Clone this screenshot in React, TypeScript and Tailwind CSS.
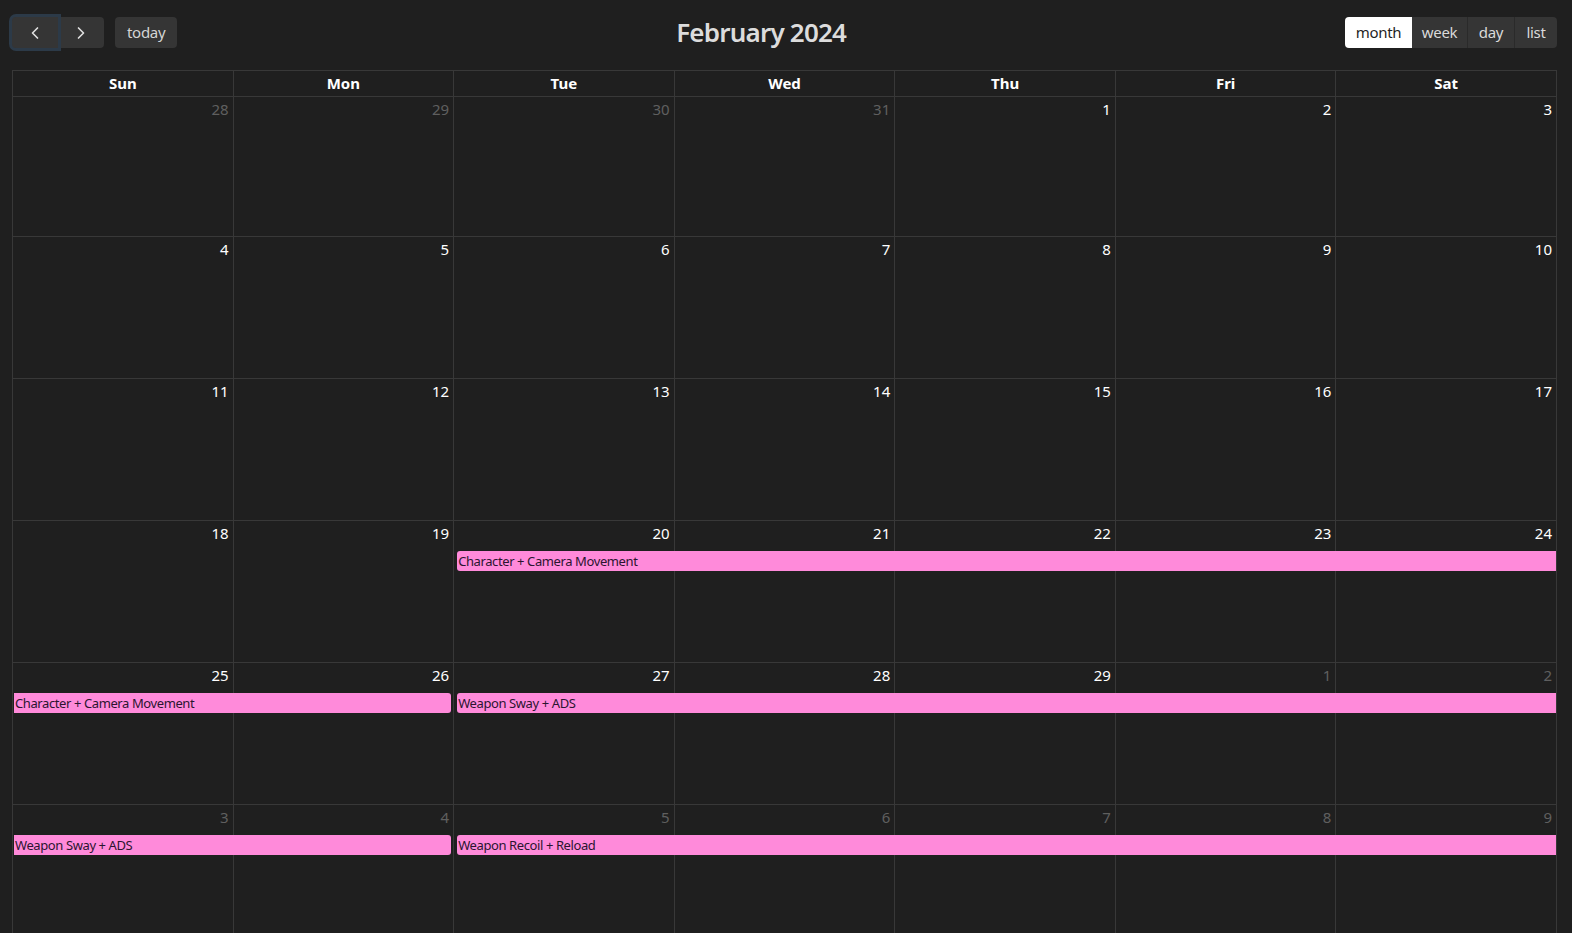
import { ChevronLeft, ChevronRight } from "lucide-react";

type Day = { n: number; muted?: boolean };
type Ev = { title: string; start: number; span: number; roundL: boolean; roundR: boolean };

const colStart: Record<number, string> = {
  1: "col-start-1",
  2: "col-start-2",
  3: "col-start-3",
  4: "col-start-4",
  5: "col-start-5",
  6: "col-start-6",
  7: "col-start-7",
};

const colSpan: Record<number, string> = {
  1: "col-span-1",
  2: "col-span-2",
  3: "col-span-3",
  4: "col-span-4",
  5: "col-span-5",
  6: "col-span-6",
  7: "col-span-7",
};

const weeks: { days: Day[]; events: Ev[]; h: string }[] = [
  {
    h: "h-[140px]",
    days: [
      { n: 28, muted: true },
      { n: 29, muted: true },
      { n: 30, muted: true },
      { n: 31, muted: true },
      { n: 1 },
      { n: 2 },
      { n: 3 },
    ],
    events: [],
  },
  { h: "h-[142px]", days: [4, 5, 6, 7, 8, 9, 10].map((n) => ({ n })), events: [] },
  { h: "h-[142px]", days: [11, 12, 13, 14, 15, 16, 17].map((n) => ({ n })), events: [] },
  {
    h: "h-[142px]",
    days: [18, 19, 20, 21, 22, 23, 24].map((n) => ({ n })),
    events: [{ title: "Character + Camera Movement", start: 3, span: 5, roundL: true, roundR: false }],
  },
  {
    h: "h-[142px]",
    days: [
      { n: 25 },
      { n: 26 },
      { n: 27 },
      { n: 28 },
      { n: 29 },
      { n: 1, muted: true },
      { n: 2, muted: true },
    ],
    events: [
      { title: "Character + Camera Movement", start: 1, span: 2, roundL: false, roundR: true },
      { title: "Weapon Sway + ADS", start: 3, span: 5, roundL: true, roundR: false },
    ],
  },
  {
    h: "h-[142px]",
    days: [3, 4, 5, 6, 7, 8, 9].map((n) => ({ n, muted: true })),
    events: [
      { title: "Weapon Sway + ADS", start: 1, span: 2, roundL: false, roundR: true },
      { title: "Weapon Recoil + Reload", start: 3, span: 5, roundL: true, roundR: false },
    ],
  },
];

const heads = ["Sun", "Mon", "Tue", "Wed", "Thu", "Fri", "Sat"];

function Week({ w }: { w: (typeof weeks)[number] }) {
  return (
    <div className={`grid grid-cols-7 grid-rows-[30px_20px_1fr] ${w.h}`}>
      {w.days.map((d, i) => (
        <div
          key={i}
          className={`${colStart[i + 1]} row-start-1 row-span-3 border-r border-b border-[#383838] flex justify-end items-start px-[4px] pt-[1px] text-[15px] leading-[22px] ${
            d.muted ? "text-[#5f5f5f]" : "text-white"
          }`}
        >
          {d.n}
        </div>
      ))}
      {w.events.map((e, i) => (
        <div
          key={i}
          className={`${colStart[e.start]} ${colSpan[e.span]} row-start-2 z-10 bg-[#ff8ada] text-[#2b1530] text-[13px] leading-[20px] tracking-[-0.4px] px-[1px] whitespace-nowrap overflow-hidden ${
            e.roundL ? "ml-[3px] rounded-l-[3px]" : "ml-[1px]"
          } ${e.roundR ? "mr-[3px] rounded-r-[3px]" : "mr-[1px]"}`}
        >
          {e.title}
        </div>
      ))}
    </div>
  );
}

export default function App() {
  return (
    <main
      className="bg-[#1f1f1f] min-h-screen text-[#e6e6e6] pl-[12px] pr-[15px] pt-[17px]"
      style={{ fontFamily: '"Noto Sans", "Open Sans", sans-serif' }}
    >
      <div className="flex items-center justify-between h-[31px]">
        <div className="flex items-center gap-[11px]">
          <div className="flex">
            <button className="w-[46px] h-[31px] bg-[#353535] rounded-l-[4px] flex items-center justify-center text-[#e0e0e0] shadow-[0_0_0_3px_#2c3a48] relative z-10">
              <ChevronLeft size={20} strokeWidth={2} />
            </button>
            <button className="w-[46px] h-[31px] bg-[#353535] rounded-r-[4px] flex items-center justify-center text-[#e0e0e0]">
              <ChevronRight size={20} strokeWidth={2} />
            </button>
          </div>
          <button className="h-[31px] px-[12px] bg-[#353535] rounded-[4px] text-[15px] tracking-[-0.3px] text-[#d4d4d4]">
            today
          </button>
        </div>
        <h2 className="text-[26px] font-semibold tracking-[-0.8px] text-[#dcdcdc] pb-[1px]">February 2024</h2>
        <div className="flex h-[31px] rounded-[4px] overflow-hidden text-[15px] tracking-[-0.3px]">
          <button className="w-[67px] bg-white text-[#1f1f1f]">month</button>
          <button className="w-[56px] bg-[#353535] text-[#dadada] border-r border-[#2a2a2a]">week</button>
          <button className="w-[47px] bg-[#353535] text-[#dadada] border-r border-[#2a2a2a]">day</button>
          <button className="w-[42px] bg-[#353535] text-[#dadada]">list</button>
        </div>
      </div>

      <div className="mt-[22px] border-t border-l border-[#383838]">
        <div className="grid grid-cols-7 h-[26px]">
          {heads.map((h) => (
            <div
              key={h}
              className="border-r border-b border-[#383838] flex items-center justify-center text-[15px] font-bold text-white pb-[1px]"
            >
              {h}
            </div>
          ))}
        </div>
        {weeks.map((w, i) => (
          <Week key={i} w={w} />
        ))}
      </div>
    </main>
  );
}
